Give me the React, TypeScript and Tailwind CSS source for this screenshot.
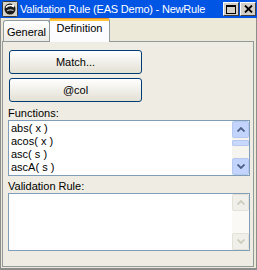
import React from 'react';

const functions = ['abs( x )', 'acos( x )', 'asc( s )', 'ascA( s )'];

function AppIcon() {
  return (
    <svg width="16" height="16" viewBox="0 0 16 16" className="shrink-0">
      <rect x="0.5" y="0.5" width="15" height="15" rx="1" fill="#D6D3CB" stroke="#3A3A3A" />
      <circle cx="8" cy="8" r="5.5" fill="#1A1A1A" />
      <path d="M4 6.5 C6 4, 10 4, 12 6" stroke="#FFFFFF" strokeWidth="1.4" fill="none" />
      <path d="M5 10 C7 8.5, 9 8.5, 11.5 9.5" stroke="#BDBDBD" strokeWidth="1.2" fill="none" />
      <circle cx="11" cy="4.5" r="1.3" fill="#FFFFFF" />
    </svg>
  );
}

function TitleButton({ kind }: { kind: 'max' | 'close' }) {
  return (
    <div className="w-[16px] h-[14px] bg-[#D4D0C8] border border-t-white border-l-white border-r-[#404040] border-b-[#404040] flex items-center justify-center">
      {kind === 'max' ? (
        <svg width="10" height="9" viewBox="0 0 10 9">
          <rect x="0.5" y="0.5" width="9" height="8" fill="none" stroke="#000" />
          <rect x="0" y="0" width="10" height="2" fill="#000" />
        </svg>
      ) : (
        <svg width="9" height="8" viewBox="0 0 9 8">
          <path d="M1 0.5 L8 7.5 M8 0.5 L1 7.5" stroke="#000" strokeWidth="1.8" />
        </svg>
      )}
    </div>
  );
}

function Arrow({ up, color }: { up: boolean; color: string }) {
  return (
    <svg width="8" height="5" viewBox="0 0 8 5">
      <path d={up ? 'M0.5 4.5 L4 1 L7.5 4.5' : 'M0.5 0.5 L4 4 L7.5 0.5'} stroke={color} strokeWidth="1.8" fill="none" />
    </svg>
  );
}

function ScrollBar({ disabled }: { disabled?: boolean }) {
  const btn = disabled
    ? 'w-[17px] h-[17px] rounded-[2px] border border-[#E4E1D6] bg-[#F0EFE9] flex items-center justify-center'
    : 'w-[17px] h-[17px] rounded-[2px] border border-[#B7C8F0] bg-[#C3D4FC] flex items-center justify-center';
  const arrow = disabled ? '#CFCCC0' : '#4D6185';
  return (
    <div className={`w-[17px] h-full flex flex-col ${disabled ? 'bg-[#FAF9F5]' : 'bg-[#F5F4EF]'}`}>
      <div className={btn}>
        <Arrow up color={arrow} />
      </div>
      {disabled ? null : (
        <div className="mt-[2px] h-[6px] rounded-[1px] border border-[#B7C8F0] bg-[#C8D8FC]" />
      )}
      <div className="flex-1" />
      <div className={btn}>
        <Arrow up={false} color={arrow} />
      </div>
    </div>
  );
}

function XPButton({ label }: { label: string }) {
  return (
    <button className="ml-[1px] w-[133px] h-[24px] rounded-[3px] border border-[#003C74] bg-linear-to-b from-white to-[#E3E0D4] text-[11px] text-black flex items-center justify-center">
      {label}
    </button>
  );
}

export default function App() {
  return (
    <div className="w-[257px] h-[270px] bg-[#ECE9D8] flex flex-col font-['Liberation_Sans',Arial,sans-serif] text-[11px] text-black overflow-hidden">
      {/* Title bar */}
      <div className="h-[18px] shrink-0 bg-[#0055E5] flex items-center pl-[2px] pr-[1px]">
        <AppIcon />
        <span className="ml-[2px] text-white text-[11px] leading-none tracking-[-0.2px] whitespace-nowrap">Validation Rule (EAS Demo) - NewRule</span>
        <div className="ml-auto flex gap-[1px] shrink-0">
          <TitleButton kind="max" />
          <TitleButton kind="close" />
        </div>
      </div>

      {/* Window body */}
      <div className="flex-1 flex flex-col border-l border-r border-b-2 border-[#8C8C8C]">
        {/* Tabs */}
        <div className="h-[23px] shrink-0 flex items-end pl-[2px]">
          <div className="w-[47px] h-[21px] rounded-t-[3px] border border-b-0 border-[#919B9C] bg-linear-to-b from-white to-[#ECEBE5] flex justify-center pt-[5px] leading-[13px]">
            General
          </div>
          <div className="-ml-[1px] relative z-10 -mb-[1px] w-[61px] h-[24px] rounded-t-[3px] border border-t-0 border-b-0 border-[#919B9C] bg-[#FCFCFE] flex flex-col">
            <div className="h-[1px] bg-[#E68B2C] rounded-t-[3px]" />
            <div className="h-[2px] bg-[#FFC73C]" />
            <div className="flex justify-center pt-[1px] leading-[13px]">Definition</div>
          </div>
        </div>

        {/* Tab panel */}
        <div className="ml-[1px] mr-[2px] h-[226px] shrink-0 border border-[#919B9C] bg-[#EFEDE3] pl-[5px] pt-[8px] flex flex-col">
          <XPButton label="Match..." />
          <div className="mt-[4px]">
            <XPButton label="@col" />
          </div>

          <div className="mt-[4px] h-[14px] leading-[14px]">Functions:</div>
          <div className="w-[242px] h-[56px] border border-[#7F9DB9] bg-white flex">
            <div className="flex-1 pt-[1px] pl-[2px]">
              {functions.map((f, i) => (
                <div key={i} className="h-[13px] leading-[13px] whitespace-pre">
                  {f}
                </div>
              ))}
            </div>
            <ScrollBar />
          </div>

          <div className="mt-[3px] h-[14px] leading-[14px]">Validation Rule:</div>
          <div className="w-[242px] h-[58px] border border-[#7F9DB9] bg-white flex">
            <div className="flex-1" />
            <ScrollBar disabled />
          </div>
        </div>
      </div>
    </div>
  );
}
